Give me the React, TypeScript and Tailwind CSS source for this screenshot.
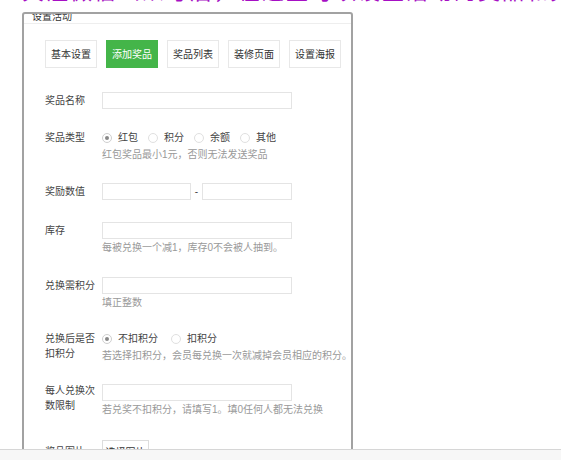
import React from 'react';

const tabs = ['基本设置', '添加奖品', '奖品列表', '装修页面', '设置海报'];

const Radio: React.FC<{ label: string; checked?: boolean; className?: string }> = ({ label, checked, className }) => (
  <label className={`flex items-center ${className || ''}`}>
    <span
      className={`w-[10px] h-[10px] rounded-full border flex items-center justify-center ${
        checked ? 'border-[#cfcfcf]' : 'border-[#e0e0e0]'
      }`}
    >
      {checked && <span className="w-[4px] h-[4px] rounded-full bg-[#888]" />}
    </span>
    <span className="ml-[6px] text-[#444]">{label}</span>
  </label>
);

const Input: React.FC<{ w?: string }> = ({ w = 'w-[190px]' }) => (
  <div className={`${w} h-[17px] border border-[#e4e4e4] bg-white`} />
);

const Hint: React.FC<{ children: React.ReactNode }> = ({ children }) => (
  <p className="mt-[2px] leading-[14px] text-[#999] whitespace-nowrap">{children}</p>
);

const Row: React.FC<{ label: React.ReactNode; className?: string; children: React.ReactNode }> = ({
  label,
  className,
  children,
}) => (
  <div className={`flex ${className || ''}`}>
    <div className="w-[57px] shrink-0 leading-[17px] text-[#444]">{label}</div>
    <div className="flex-1">{children}</div>
  </div>
);

export default function App() {
  return (
    <div
      className="relative w-[561px] h-[460px] overflow-hidden bg-white text-[10px]"
      style={{ fontFamily: '"Liberation Sans", "Noto Sans CJK SC", sans-serif' }}
    >
      {/* top heading, mostly scrolled out of view */}
      <div className="h-[6px] overflow-hidden">
        <p className="-mt-[19px] pl-[22px] text-[22px] leading-[22px] text-[#a60fc4] whitespace-nowrap tracking-[2px]">
          关注微信公众号后，在这里可以设置活动的奖品和兑换规则，并进行发放
        </p>
      </div>

      <div className="ml-[22px] mt-[6px] w-[331px] border-2 border-[#a2a2a2] rounded-t-[3px] pb-[40px]">
        <div className="h-[10px] overflow-hidden border-b border-[#eeeeee]">
          <p className="-mt-[3px] pl-[8px] leading-[12px] text-[#333]">设置活动</p>
        </div>

        <div className="flex gap-[9px] pl-[21px] pt-[16px]">
          {tabs.map((t, i) => (
            <div
              key={t}
              className={`w-[52px] h-[28px] flex items-center justify-center border ${
                i === 1 ? 'bg-[#44b549] border-[#44b549] text-white' : 'border-[#e8e8e8] text-[#333]'
              }`}
            >
              {t}
            </div>
          ))}
        </div>

        <div className="pl-[21px]">
          <Row label="奖品名称" className="mt-[24px]">
            <Input />
          </Row>

          <Row label="奖品类型" className="mt-[20px]">
            <div className="flex h-[17px] items-center">
              <Radio label="红包" checked className="mr-[10px]" />
              <Radio label="积分" className="mr-[10px]" />
              <Radio label="余额" className="mr-[10px]" />
              <Radio label="其他" />
            </div>
            <Hint>红包奖品最小1元，否则无法发送奖品</Hint>
          </Row>

          <Row label="奖励数值" className="mt-[21px]">
            <div className="flex items-center">
              <Input w="w-[89px]" />
              <span className="w-[11px] text-center text-[#444]">-</span>
              <Input w="w-[90px]" />
            </div>
          </Row>

          <Row label="库存" className="mt-[22px]">
            <Input />
            <Hint>每被兑换一个减1，库存0不会被人抽到。</Hint>
          </Row>

          <Row label="兑换需积分" className="mt-[22px]">
            <Input />
            <Hint>填正整数</Hint>
          </Row>

          <Row
            label={
              <span className="block leading-[15px] pt-[1px]">
                兑换后是否
                <br />
                扣积分
              </span>
            }
            className="mt-[20px]"
          >
            <div className="flex h-[17px] items-center">
              <Radio label="不扣积分" checked className="mr-[13px]" />
              <Radio label="扣积分" />
            </div>
            <Hint>若选择扣积分，会员每兑换一次就减掉会员相应的积分。</Hint>
          </Row>

          <Row
            label={
              <span className="block leading-[15px] -mt-[1px]">
                每人兑换次
                <br />
                数限制
              </span>
            }
            className="mt-[21px]"
          >
            <Input />
            <Hint>若兑奖不扣积分，请填写1。填0任何人都无法兑换</Hint>
          </Row>

          <Row label={<span className="block pt-[3px]">奖品图片</span>} className="mt-[23px]">
            <div className="w-[47px] h-[24px] border border-[#dddddd] flex items-center justify-center text-[#333]">
              选择图片
            </div>
          </Row>
        </div>
      </div>

      {/* bottom bar overlaying the page */}
      <div className="absolute left-0 right-0 bottom-0 h-[11px] bg-[#f7f7f7] border-t border-[#d6d6d6]" />
    </div>
  );
}
